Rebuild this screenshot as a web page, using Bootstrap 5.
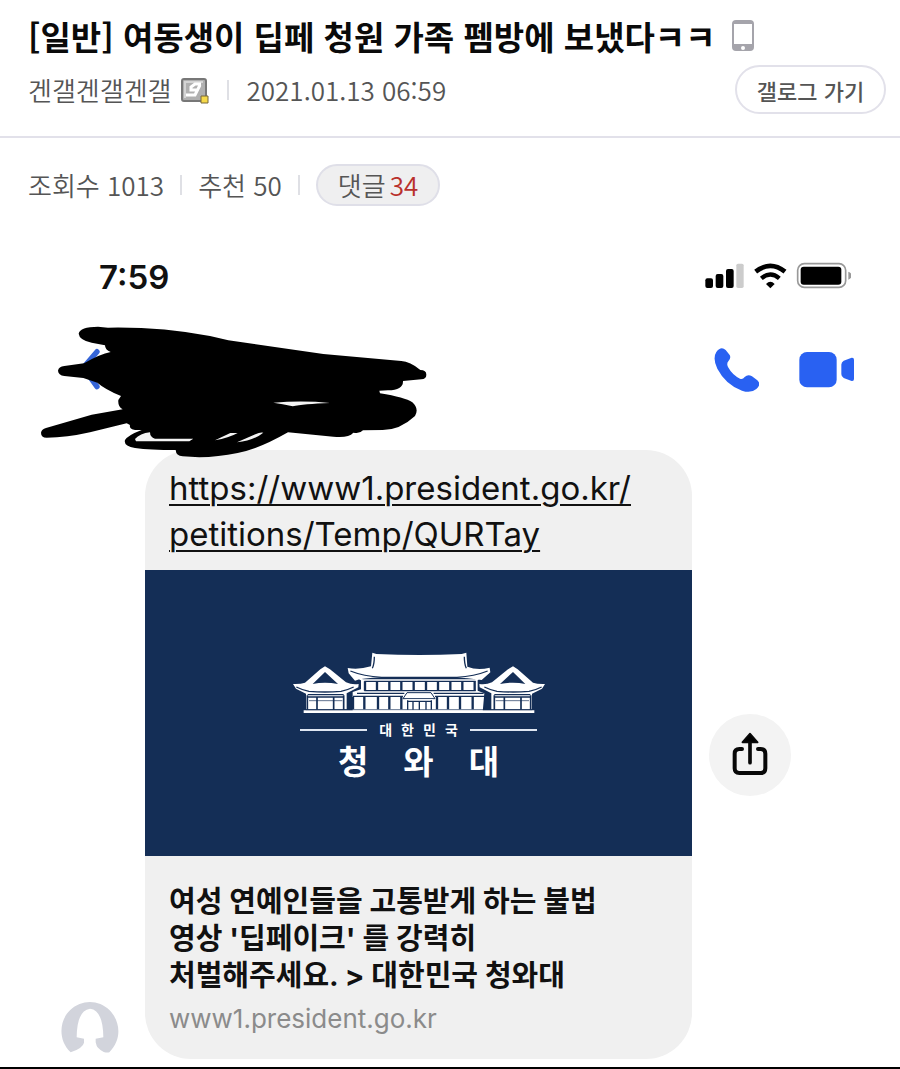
<!DOCTYPE html>
<html lang="ko">
<head>
<meta charset="utf-8">
<meta name="viewport" content="width=device-width, initial-scale=1">
<title>여동생이 딥페 청원 가족 펨방에 보냈다ㅋㅋ</title>
<link href="https://cdn.jsdelivr.net/npm/bootstrap@5.3.0/dist/css/bootstrap.min.css" rel="stylesheet">
<style>
  body { font-family: "Noto Sans CJK KR", sans-serif; color: #555; background: #fff; border-bottom: 2px solid #000; }
  svg { display: block; flex-shrink: 0; }
  .post-head { padding: 12px 14px 22px 28px; border-bottom: 2px solid #e2e1ea; }
  .post-title { font-size: 33px; line-height: 48px; font-weight: 700; color: #0a0a0a; }
  .author-row { padding-top: 5px; }
  .meta { font-size: 26px; line-height: 40px; font-weight: 350; color: #555; }
  .meta-gap { gap: 18px; }
  .rule { width: 2px; height: 20px; background: #dfe0e5; }
  .log-btn { width: 151px; height: 49px; border: 2px solid #e2e1ea; border-radius: 25px; font-size: 22px; line-height: 40px; font-weight: 500; color: #555; padding: 0; }
  .stats { padding: 26px 28px 20px; }
  .pill { height: 42px; padding: 0 20px; border: 2px solid #dfdfe8; border-radius: 21px; background: #efeff0; color: #555; text-decoration: none; }
  .pill span { color: #b9302c; }
  .phone { font-family: Inter, "Noto Sans CJK KR", sans-serif; }
  .phone-head { height: 224px; padding: 27px 49px 0 99px; }
  .clock { font-size: 33px; line-height: 48px; font-weight: 600; color: #111; }
  .call-row { padding: 46px 0 0; margin-right: -3px; }
  .scribble { position: absolute; left: 20px; top: -6px; z-index: 2; }
  .icon-btn { border: 0; background: none; padding: 0; }
  .chat { padding: 0 0 8px 61px; gap: 17px; }
  .avatar { width: 67px; padding-bottom: 6px; }
  .bubble { flex: 0 1 547px; background: #f0f0f0; border-radius: 46px; overflow: hidden; }
  .url { display: block; padding: 15px 24px 13px; font-size: 33px; line-height: 46px; color: #111; text-decoration-thickness: 2px; text-underline-offset: 4px; }
  .banner { height: 286px; background: #142e56; color: #fff; padding-top: 80px; }
  .banner-line { width: 67px; height: 2px; background: #dfe6f2; }
  .country { font-size: 14px; line-height: 20px; font-weight: 700; gap: 9px; }
  .house { font-size: 33px; line-height: 44px; font-weight: 700; gap: 35px; }
  .caption { padding: 27px 24px 24px; }
  .caption h2 { font-size: 29px; line-height: 37px; font-weight: 700; color: #111; }
  .host { font-size: 26px; line-height: 33px; color: #8b8b8b; }
  .share { width: 82px; height: 82px; border: 0; border-radius: 50%; background: #f3f3f3; padding: 0; }
</style>
</head>
<body>
<header class="post-head">
  <div class="d-flex align-items-center gap-3">
    <h1 class="post-title m-0">[일반] 여동생이 딥페 청원 가족 펨방에 보냈다ㅋㅋ</h1>
    <svg width="22" height="32" viewBox="0 0 22 32" aria-hidden="true"><rect width="22" height="31" rx="4" fill="#a5a4ab"/><path fill="#fff" d="M2 4h18v20H2z"/><circle cx="11" cy="28" r="2" fill="#fff"/></svg>
  </div>
  <div class="author-row d-flex align-items-center justify-content-between">
    <div class="meta meta-gap d-flex align-items-center">
      <div class="d-flex align-items-center gap-2"><span>겐갤겐갤겐갤</span>
      <svg width="29" height="28" viewBox="0 0 29 28" aria-hidden="true"><rect x="2" y="3" width="24" height="22" rx="2" fill="#b0b0b0" stroke="#777" stroke-width="2"/><path d="M5 22V6h18" fill="none" stroke="#d4d4d4" stroke-width="2"/><path d="M21 8h-6l-4 3v3h6M20 9l-5 10H6" fill="none" stroke="#fff" stroke-width="3"/><path d="M21 20h7v7h-7z" fill="#f6d949" stroke="#79683a"/></svg></div>
      <span class="rule"></span>
      <span>2021.01.13 06:59</span>
    </div>
    <button class="btn log-btn" type="button">갤로그 가기</button>
  </div>
</header>
<main>
  <div class="stats meta gap-3 d-flex align-items-center">
    <span>조회수 1013</span><span class="rule"></span><span>추천 50</span><span class="rule"></span>
    <a class="pill d-flex align-items-center gap-1" href="#comments">댓글<span>34</span></a>
  </div>
  <section class="phone">
    <div class="phone-head position-relative">
      <div class="d-flex align-items-center justify-content-between">
        <div class="clock">7:59</div>
        <svg width="150" height="30" viewBox="0 0 450 90" aria-hidden="true">
          <rect x="13" y="49" width="23" height="29" rx="6"/><rect x="44" y="36" width="23" height="42" rx="6"/><rect x="75" y="21" width="23" height="57" rx="6"/><rect x="106" y="5" width="22" height="73" rx="5" fill="#ccc"/>
          <path d="M164 29Q208-6 252 29" fill="none" stroke="#000" stroke-width="14"/><path d="M181 49Q208 26 235 49" fill="none" stroke="#000" stroke-width="13"/><path d="m195 66q13-13 26 0l-13 13z"/>
          <rect x="290" y="5" width="144" height="71" rx="20" fill="none" stroke="#999" stroke-width="5"/><rect x="299" y="14" width="122" height="54" rx="9"/><path d="M442 29q10 4 10 12t-10 12z" fill="#999"/>
        </svg>
      </div>
      <div class="call-row d-flex justify-content-end gap-4">
        <button class="icon-btn" type="button" aria-label="통화"><svg width="46" height="46" viewBox="0 0 138 138"><path fill="#2961f2" d="M10 15Q24-4 38 9l12 15q5 9-4 19-6 7-1 17 13 24 36 35 8 3 14-5 10-10 22-2l16 12q13 12-3 26-16 14-43 5Q38 113 13 65-2 34 10 15z"/></svg></button>
        <button class="icon-btn ms-3" type="button" aria-label="영상 통화"><svg width="55" height="46" viewBox="0 0 165 138"><rect x="1" y="15" width="112" height="106" rx="23" fill="#2961f2"/><path fill="#2961f2" d="M127 53q0-8 7-12l24-9q7-1 7 6v58q0 7-7 6l-24-9q-7-4-7-12z"/></svg></button>
      </div>
      <svg class="scribble" width="420" height="250" viewBox="0 0 1260 750" aria-hidden="true">
        <path d="M231 395l-41 48 41 57" fill="none" stroke="#3565d8" stroke-width="16" stroke-linecap="round"/>
        <path d="M176 341Q180 320 234 320L264 323Q420 320 570 348L625 361 910 402 1144 423Q1170 424 1201 450 1219 450 1219 464 1219 477 1204 478L1149 483Q1150 510 1104 511L1078 512 1080 520Q1155 532 1177 547 1198 566 1185 588 1140 630 1088 630L1029 631Q1020 642 1000 638 985 655 940 650L804 637Q715 688 653 699 568 717 488 709 468 707 467 690 390 690 345 684 310 678 315 660 325 645 365 630 325 632 330 615L320 610 210 637Q140 653 80 653 63 653 63 638 65 628 78 624L215 584 308 568Q293 560 295 540L303 528Q255 508 232 488L190 474 133 468Q115 465 114 452 116 440 133 438L192 430Q240 402 272 396 255 390 255 376L215 368Q178 360 176 341z"/>
        <path d="M760 548q90-7 170 1-81 3-112 10-31-8-58-11zM345 657q15-17 45-20 0 15 15 19h115l-12 8H348zM585 661l46-22h22q-27 15-68 22zM651 667l55-24q14-7 24-5-30 24-79 29z" fill="#f4f4f4"/>
      </svg>
    </div>
    <div class="chat d-flex align-items-end">
      <div class="avatar"><svg width="58" height="51" viewBox="0 0 174 153" aria-hidden="true"><path fill="#d2d4dc" d="M29 151C-11 112-4 54 27 25c36-34 86-32 119 0 32 33 38 87-1 126-16 5-35-13-38-20l-3-10v-11l23-4q-1-82-40-86-39 5-40 86l22 4v12q-3 16-40 29z"/></svg></div>
      <article class="bubble">
        <a class="url" href="https://www1.president.go.kr/petitions/Temp/QURTay">https://www1.president.go.kr/<br>petitions/Temp/QURTay</a>
        <div class="banner d-flex flex-column align-items-center">
          <svg width="256" height="66" viewBox="30 30 768 198" aria-hidden="true" fill="#fff">
            <path d="M274 38l12 4q130 6 256 0l14-4 3 42q30 12 67 3l2 14-26 23q-42-6-85-8H302q-58 2-80 10l-19-22-3-16q33 6 70-5z"/>
            <path d="M208 93q40 16 94 19h226q52-3 92-19M280 50q0 22-6 35M550 50q0 22 6 35" fill="none" stroke="#142e56" stroke-width="4"/>
            <path d="M205 97l38 23v34M623 97l-38 23v34" fill="none" stroke="#fff" stroke-width="5"/>
            <path d="M240 118h350v34l20 8-5 56H215v-60l25-8z"/>
            <path fill="none" stroke="#142e56" stroke-width="4" d="M250 124h334M250 152h334M228 160h142M458 160h150M216 169h150M462 169h150"/>
            <path fill="none" stroke="#142e56" stroke-width="7" d="M252 124v28M288 124v28M325 124v28M361 124v28M398 124v28M435 124v28M471 124v28M508 124v28M544 124v28M581 124v28M216 171v37M250 171v37M291 171v37M325 171v37M361 171v37M468 171v37M501 171v37M537 171v37M575 171v37M613 171v37"/>
            <path d="M378 158h72l12 18H366z" stroke="#142e56" stroke-width="3"/>
            <path d="M374 178h82v33h-82z"/><path d="M380 181v28M396 185v24M415 185v24M435 185v24M451 181v28M378 184h74" fill="none" stroke="#142e56" stroke-width="4"/>
            <g id="wing"><path d="M36 132q22 1 36-4l46-40 14-9 15 9 48 39q18 8 38 5l-1 10-35 18v48H75v-47l-30-15z"/><path fill="#142e56" d="M132 96l39 36q-40-8-76 0z"/><path d="M46 141q20 10 38 13 48 4 96 0 20-4 38-13M80 164h108M80 171h108" fill="none" stroke="#142e56" stroke-width="4"/><path d="M79 166v43M108 171v38M158 171v38M188 166v43" fill="none" stroke="#142e56" stroke-width="5"/><path d="M84 182h100" stroke="#142e56" stroke-width="2"/></g>
            <use href="#wing" transform="translate(828 0) scale(-1 1)"/>
            <path d="M68 211h692v8H68z"/><path d="M75 209h678" stroke="#142e56" stroke-width="2"/>
          </svg>
          <div class="d-flex align-items-center justify-content-center gap-2 pt-1">
            <span class="banner-line"></span><div class="country d-flex px-1"><span>대</span><span>한</span><span>민</span><span>국</span></div><span class="banner-line"></span>
          </div>
          <div class="house d-flex"><span>청</span><span>와</span><span>대</span></div>
        </div>
        <div class="caption">
          <h2 class="mb-2">여성 연예인들을 고통받게 하는 불법<br>영상 '딥페이크' 를 강력히<br>처벌해주세요. &gt; 대한민국 청와대</h2>
          <div class="host">www1.president.go.kr</div>
        </div>
      </article>
      <button class="share align-self-center d-flex align-items-center justify-content-center" type="button" aria-label="공유"><svg width="36" height="46" viewBox="0 0 108 138"><path d="M30 51H22Q8 51 8 65v44q0 14 14 14h64q14 0 14-14V65q0-14-14-14h-8" fill="none" stroke="#080808" stroke-width="12" stroke-linecap="round"/><path d="M54 92V24" stroke="#080808" stroke-width="11" stroke-linecap="round"/><path d="M54 5L77 31H31z" stroke="#080808" stroke-width="5" stroke-linejoin="round"/></svg></button>
    </div>
  </section>
</main>
<script src="https://cdn.jsdelivr.net/npm/bootstrap@5.3.0/dist/js/bootstrap.bundle.min.js"></script>
</body>
</html>
